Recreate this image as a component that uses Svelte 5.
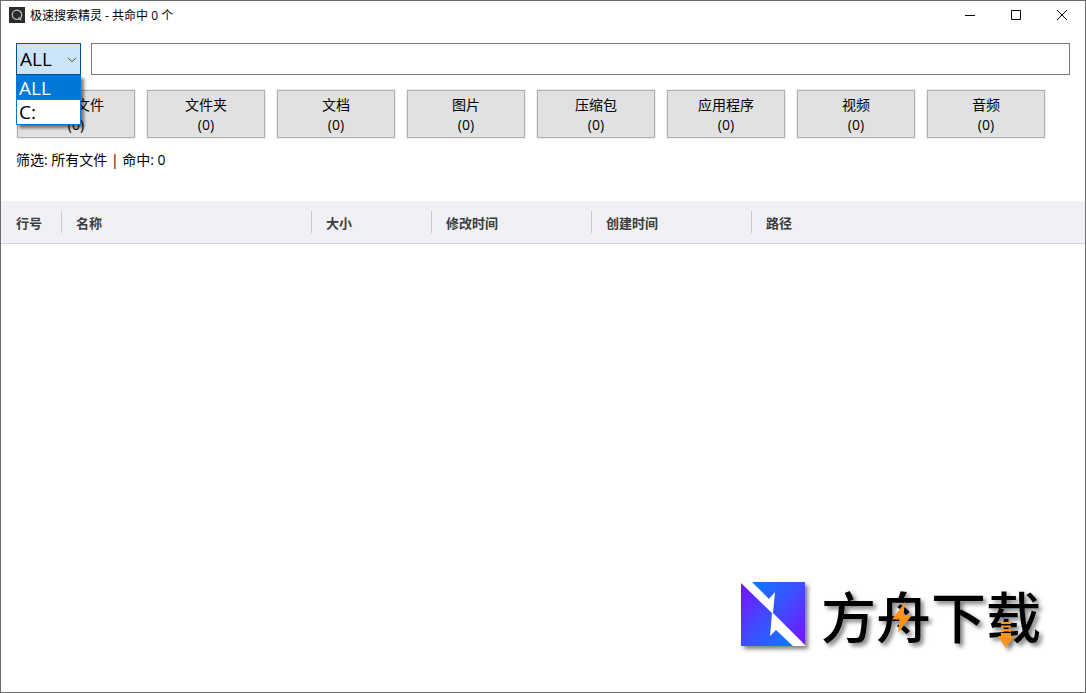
<script>
    const drives = ['ALL', 'C:'];

    const categories = [
        { id: 'all',     label: '所有文件' },
        { id: 'folder',  label: '文件夹' },
        { id: 'doc',     label: '文档' },
        { id: 'image',   label: '图片' },
        { id: 'archive', label: '压缩包' },
        { id: 'app',     label: '应用程序' },
        { id: 'video',   label: '视频' },
        { id: 'audio',   label: '音频' },
    ];

    const columns = [
        { label: '行号',     width: '60px' },
        { label: '名称',     width: '250px' },
        { label: '大小',     width: '120px' },
        { label: '修改时间', width: '160px' },
        { label: '创建时间', width: '160px' },
        { label: '路径',     width: 'auto' },
    ];

    let drive = $state('ALL');
    let open = $state(true);
    let query = $state('');
    let filter = $state('all');

    const hits = 0;
    let filterLabel = $derived(categories.find(c => c.id === filter).label);

    function toggleList(e) {
        e.preventDefault();
        open = !open;
    }

    function pickDrive(d) {
        drive = d;
        open = false;
    }
</script>

<div class="window">
    <header class="titlebar">
        <svg class="app-icon" viewBox="0 0 16 16" aria-hidden="true">
            <rect width="16" height="16" fill="#2b2b2d" />
            <circle cx="8" cy="7.8" r="4.7" fill="none" stroke="#c4c4c4" stroke-width="1.2" />
            <path d="M9.500 10.500l2.800 2.500" stroke="#c4c4c4" stroke-width="1.200" />
        </svg>
        <h1 class="title">极速搜索精灵 - 共命中 {hits} 个</h1>
        <button class="win-btn" aria-label="最小化">
            <svg viewBox="0 0 10 10"><path d="M0 5.5h10" /></svg>
        </button>
        <button class="win-btn" aria-label="最大化">
            <svg viewBox="0 0 10 10"><path d="M.5 .5h9v9h-9z" /></svg>
        </button>
        <button class="win-btn" aria-label="关闭">
            <svg viewBox="0 0 10 10"><path d="M0 0l10 10M10 0L0 10" /></svg>
        </button>
    </header>

    <div class="search-row">
        <div class="drive">
            <select class="drive-select" aria-label="磁盘" bind:value={drive} onmousedown={toggleList}>
                {#each drives as d}
                    <option value={d}>{d}</option>
                {/each}
            </select>
            <svg class="chevron" viewBox="0 0 10 6" aria-hidden="true"><path d="M1 .8l4 4 4-4" /></svg>
            {#if open}
                <div class="drive-list">
                    {#each drives as d}
                        <button class="drive-item" class:active={d === drive} onclick={() => pickDrive(d)}>{d}</button>
                    {/each}
                </div>
            {/if}
        </div>
        <input class="query" type="text" aria-label="搜索" bind:value={query} spellcheck="false" autocomplete="off" />
    </div>

    <div class="categories">
        {#each categories as c}
            <button class="category" onclick={() => (filter = c.id)}>{c.label}<br />({hits})</button>
        {/each}
    </div>

    <p class="status">筛选: {filterLabel} | 命中: {hits}</p>

    <table class="results">
        <colgroup>
            {#each columns as col}
                <col style="width: {col.width}" />
            {/each}
        </colgroup>
        <thead>
            <tr>
                {#each columns as col}
                    <th scope="col"><span class="col-label">{col.label}</span></th>
                {/each}
            </tr>
        </thead>
        <tbody></tbody>
    </table>

    <footer class="brand">
        <svg class="brand-mark" viewBox="0 0 64 64" aria-hidden="true">
            <defs>
                <linearGradient id="mark-top" x1="0" y1="0" x2="1" y2="1">
                    <stop offset="0" stop-color="#0a7cff" />
                    <stop offset=".5" stop-color="#3f4cff" />
                    <stop offset="1" stop-color="#7a10ff" />
                </linearGradient>
                <linearGradient id="mark-bottom" x1="0" y1="0" x2="1" y2="1">
                    <stop offset="0" stop-color="#7a10ff" />
                    <stop offset=".5" stop-color="#3f4cff" />
                    <stop offset="1" stop-color="#0a7cff" />
                </linearGradient>
            </defs>
            <rect width="64" height="64" fill="#fff" />
            <path d="M11 0H64V63L32 31L34 10L28 17Z" fill="url(#mark-top)" />
            <path d="M0 1L31 31L29 54L35 48L52 64H0Z" fill="url(#mark-bottom)" />
        </svg>
        <div class="wordmark">
            方舟下载
            <svg class="bolt" viewBox="0 0 20 31" aria-hidden="true">
                <path d="M13 0L0 17.500H7.500L6 31L20 13H11.500Z" />
            </svg>
            <svg class="arrow" viewBox="0 0 16 26" aria-hidden="true">
                <path d="M3 0h10v2H3zM3 3.500h10v2H3zM3 7h10v2.500H3zM3 11h10v3h3L8 26L0 14h3z" />
            </svg>
        </div>
    </footer>
</div>

<style>
    :global(body) {
        margin: 0;
        background: #fff;
    }
    .window {
        box-sizing: border-box;
        min-height: 100vh;
        display: flex;
        flex-direction: column;
        border: 1px solid #6d6b6d;
        background: #fff;
        color: #000;
        font-family: "Open Sans", "Noto Sans CJK SC", sans-serif;
        font-size: 14px;
        line-height: 20px;
    }
    button,
    select,
    input {
        box-sizing: border-box;
        margin: 0;
        border-radius: 0;
        color: inherit;
        font: inherit;
    }
    .titlebar {
        display: flex;
        align-items: center;
        height: 28px;
        padding-left: 8px;
    }
    .app-icon {
        width: 16px;
        height: 16px;
        margin-right: 5px;
    }
    .title {
        flex: 1;
        margin: 0;
        padding-top: 2px;
        font-size: 12px;
        font-weight: normal;
    }
    .win-btn {
        display: flex;
        align-items: center;
        justify-content: center;
        width: 46px;
        height: 28px;
        padding: 0;
        border: none;
        background: none;
    }
    .win-btn:hover {
        background: #e5e5e5;
    }
    .win-btn svg {
        width: 10px;
        height: 10px;
        overflow: visible;
        fill: none;
        stroke: #000;
        stroke-width: 1;
    }
    .search-row {
        display: flex;
        gap: 10px;
        padding: 14px 15px;
    }
    .drive {
        position: relative;
        width: 65px;
        font-size: 19px;
        line-height: 24px;
    }
    .drive-select {
        appearance: none;
        width: 100%;
        height: 32px;
        padding: 0 3px;
        border: 1px solid #005499;
        background: #cce4f7;
        outline: none;
    }
    .chevron {
        position: absolute;
        top: 14px;
        right: 4px;
        width: 10px;
        height: 6px;
        fill: none;
        stroke: #444;
        pointer-events: none;
    }
    .drive-list {
        position: absolute;
        top: 100%;
        left: 0;
        z-index: 1;
        box-sizing: border-box;
        width: 100%;
        border: 1px solid #0078d7;
        background: #fff;
        box-shadow: 3px 3px 3px rgba(0, 0, 0, 0.5);
    }
    .drive-item {
        display: block;
        width: 100%;
        padding: 0 2px;
        border: none;
        background: none;
        text-align: left;
    }
    .drive-item.active {
        background: #0078d7;
        color: #fff;
    }
    .query {
        flex: 1;
        min-width: 0;
        height: 32px;
        padding: 0 6px;
        border: 1px solid #7a7a7a;
        background: #fff;
        font-size: 19px;
    }
    .query:focus {
        outline: none;
        border-color: #0078d7;
    }
    .categories {
        display: flex;
        flex-wrap: wrap;
        gap: 10px;
        padding: 0 15px;
    }
    .category {
        width: 120px;
        height: 50px;
        padding: 2px 0 0;
        border: 1px solid #f0f0f0;
        background: #e1e1e1;
        box-shadow: inset 0 0 0 1px #adadad;
    }
    .category:hover {
        background: #e5f1fb;
        box-shadow: inset 0 0 0 1px #0078d7;
    }
    .status {
        margin: 0;
        padding: 11px 15px 31px;
    }
    .results {
        width: 100%;
        table-layout: fixed;
        border-collapse: collapse;
    }
    th {
        height: 42px;
        padding: 0;
        border-bottom: 1px solid #d5d6da;
        background: #f0f1f6;
        color: #3c3c3c;
        font-size: 13px;
        font-weight: bold;
        text-align: left;
    }
    .col-label {
        display: block;
        box-sizing: border-box;
        height: 22px;
        padding-left: 15px;
        line-height: 24px;
    }
    th + th .col-label {
        border-left: 1px solid #c8c9cd;
        padding-left: 14px;
    }
    .brand {
        display: flex;
        align-items: center;
        align-self: flex-end;
        gap: 16px;
        margin-top: auto;
        padding: 0 44px 46px 0;
        filter: drop-shadow(3px 3px 2px rgba(0, 0, 0, 0.5));
    }
    .brand-mark {
        width: 64px;
        height: 64px;
    }
    .wordmark {
        position: relative;
        font-family: "Noto Sans CJK SC", sans-serif;
        font-size: 55px;
        font-weight: 500;
        line-height: 60px;
    }
    .bolt {
        position: absolute;
        top: 18px;
        left: 71px;
        width: 20px;
        height: 31px;
        fill: #ff931e;
    }
    .arrow {
        position: absolute;
        top: 38px;
        left: 177px;
        width: 16px;
        height: 26px;
        fill: #ff931e;
    }
</style>
